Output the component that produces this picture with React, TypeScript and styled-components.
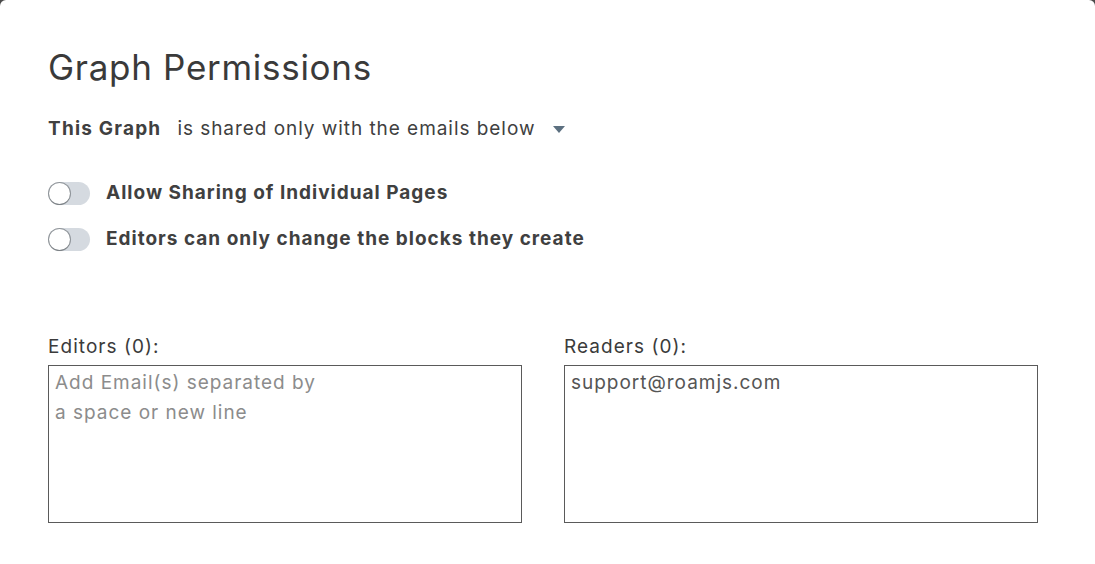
import React, { useEffect, useRef } from "react";
import styled, { createGlobalStyle } from "styled-components";

const Global = createGlobalStyle`
  html, body { margin: 0; padding: 0; background: #4a4a4a; }
  body { font-family: Inter, "Noto Sans", sans-serif; }
  * { box-sizing: border-box; }
`;

const Dialog = styled.div`
  background: #ffffff;
  border-radius: 6px 6px 0 0;
  min-height: 564px;
  padding: 47px 57px 0 48px;
  color: #3b3b3b;
`;

const Title = styled.h2`
  margin: 0;
  font-size: 35px;
  line-height: 40px;
  font-weight: 400;
  color: #3a3a3a;
  letter-spacing: 0.7px;
`;

const ShareLine = styled.div`
  display: flex;
  align-items: center;
  margin-top: 30px;
  font-size: 19px;
  line-height: 24px;
  letter-spacing: 0.95px;
  color: #404040;
`;

const Scope = styled.span`
  font-weight: 700;
  letter-spacing: 1.2px;
  margin-right: 16px;
`;

const Caret = styled.span`
  display: inline-block;
  width: 0;
  height: 0;
  margin-left: 18px;
  margin-top: 1px;
  border-left: 6px solid transparent;
  border-right: 6px solid transparent;
  border-top: 7px solid #5c7080;
`;

const Toggles = styled.div`
  display: flex;
  flex-direction: column;
  gap: 22px;
  margin-top: 40px;
`;

const ToggleRow = styled.label`
  display: flex;
  align-items: center;
  gap: 16px;
  font-size: 19px;
  line-height: 24px;
  font-weight: 700;
  letter-spacing: 1px;
  color: #404040;
`;

const Track = styled.span<{ $on?: boolean }>`
  position: relative;
  width: 42px;
  height: 23px;
  border-radius: 12px;
  background: ${(p) => (p.$on ? "#137cbd" : "#d5dae0")};
  flex: none;
`;

const Knob = styled.span`
  position: absolute;
  left: 1px;
  top: 1px;
  width: 21px;
  height: 21px;
  border-radius: 50%;
  background: #ffffff;
  box-shadow: 0 0 0 1px rgba(16, 22, 26, 0.35), 0 1px 1px rgba(16, 22, 26, 0.2);
`;

const Columns = styled.div`
  display: grid;
  grid-template-columns: 1fr 1fr;
  column-gap: 42px;
  margin-top: 84px;
`;

const Field = styled.div`
  display: flex;
  flex-direction: column;
`;

const FieldLabel = styled.label`
  font-size: 19px;
  line-height: 24px;
  letter-spacing: 1.05px;
  color: #3b3b3b;
  margin-bottom: 6px;
`;

const Area = styled.textarea`
  width: 100%;
  height: 158px;
  border: 1px solid #5a5a5a;
  border-radius: 0;
  padding: 2px 6px;
  font-family: Inter, "Noto Sans", sans-serif;
  font-size: 19px;
  line-height: 30px;
  letter-spacing: 0.98px;
  color: #555555;
  resize: none;
  outline: none;
  background: #ffffff;
  caret-color: #222;
  &::placeholder {
    color: #8c8c8c;
  }
`;

const Toggle = ({ label }: { label: string }) => (
  <ToggleRow>
    <Track>
      <Knob />
    </Track>
    {label}
  </ToggleRow>
);

export default function App() {
  const ref = useRef<HTMLTextAreaElement>(null);
  useEffect(() => {
    const el = ref.current;
    if (el) {
      el.focus();
      const n = el.value.length;
      el.setSelectionRange(n, n);
    }
  }, []);
  return (
    <>
      <Global />
      <Dialog>
        <Title>Graph Permissions</Title>
        <ShareLine>
          <Scope>This Graph</Scope>
          is shared only with the emails below
          <Caret />
        </ShareLine>
        <Toggles>
          <Toggle label="Allow Sharing of Individual Pages" />
          <Toggle label="Editors can only change the blocks they create" />
        </Toggles>
        <Columns>
          <Field>
            <FieldLabel>Editors (0):</FieldLabel>
            <Area placeholder={"Add Email(s) separated by\na space or new line"} />
          </Field>
          <Field>
            <FieldLabel>Readers (0):</FieldLabel>
            <Area ref={ref} defaultValue="support@roamjs.com" />
          </Field>
        </Columns>
      </Dialog>
    </>
  );
}
